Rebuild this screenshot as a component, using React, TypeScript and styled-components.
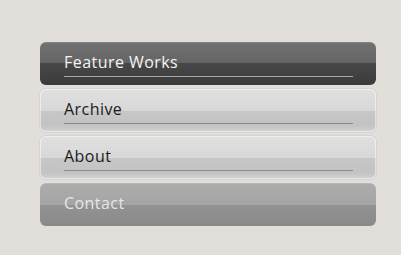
import React from 'react';
import styled, { createGlobalStyle, css } from 'styled-components';

type Variant = 'active' | 'normal' | 'muted';

type Item = {
  label: string;
  variant: Variant;
  underline: boolean;
};

const items: Item[] = [
  { label: 'Feature Works', variant: 'active', underline: true },
  { label: 'Archive', variant: 'normal', underline: true },
  { label: 'About', variant: 'normal', underline: true },
  { label: 'Contact', variant: 'muted', underline: false },
];

const GlobalStyle = createGlobalStyle`
  html, body {
    margin: 0;
    padding: 0;
    background: #e2dfdb;
  }
`;

const App = () => (
  <>
    <GlobalStyle />
    <Page>
      <Menu>
        {items.map((item) => (
          <MenuButton key={item.label} $variant={item.variant}>
            <Label $variant={item.variant} $underline={item.underline}>
              {item.label}
            </Label>
          </MenuButton>
        ))}
      </Menu>
    </Page>
  </>
);

const Page = styled.div`
  width: 401px;
  height: 255px;
  box-sizing: border-box;
  padding: 42px 25px 0 40px;
  font-family: 'Open Sans', 'Liberation Sans', sans-serif;
`;

const Menu = styled.nav`
  display: flex;
  flex-direction: column;
  gap: 4px;
  width: 336px;
`;

const looks = {
  active: css`
    background: linear-gradient(
      to bottom,
      #727272 0%,
      #646464 50%,
      #474747 50%,
      #3b3b3b 100%
    );
    box-shadow: inset 0 1px 0 rgba(255, 255, 255, 0.12);
  `,
  normal: css`
    background: linear-gradient(
      to bottom,
      #e0e0e0 0%,
      #d8d8d8 50%,
      #c7c7c7 50%,
      #c3c3c3 85%,
      #d2d2d2 100%
    );
    box-shadow: inset 0 0 0 1px rgba(255, 255, 255, 0.5), 0 0 0 1px #d6d3cf;
  `,
  muted: css`
    background: linear-gradient(
      to bottom,
      #acacac 0%,
      #a5a5a5 50%,
      #939393 50%,
      #898989 100%
    );
    box-shadow: inset 0 1px 0 rgba(255, 255, 255, 0.15);
  `,
};

const MenuButton = styled.div<{ $variant: Variant }>`
  ${({ $variant }) => css`
    height: 43px;
    border-radius: 6px;
    box-sizing: border-box;
    padding: 10px 23px 0 24px;
    ${looks[$variant]}
  `}
`;

const Label = styled.div<{ $variant: Variant; $underline: boolean }>`
  ${({ $variant, $underline }) => css`
    font-size: 16px;
    font-weight: 500;
    letter-spacing: 0.45px;
    line-height: 20px;
    padding-bottom: 4px;
    color: ${$variant === 'active' ? '#f4f4f4' : $variant === 'muted' ? '#e6e6e6' : '#1a1a1a'};
    border-bottom: 1px solid
      ${$underline ? ($variant === 'active' ? '#a9a9a9' : '#8a8a8a') : 'transparent'};
  `}
`;

export default App;
